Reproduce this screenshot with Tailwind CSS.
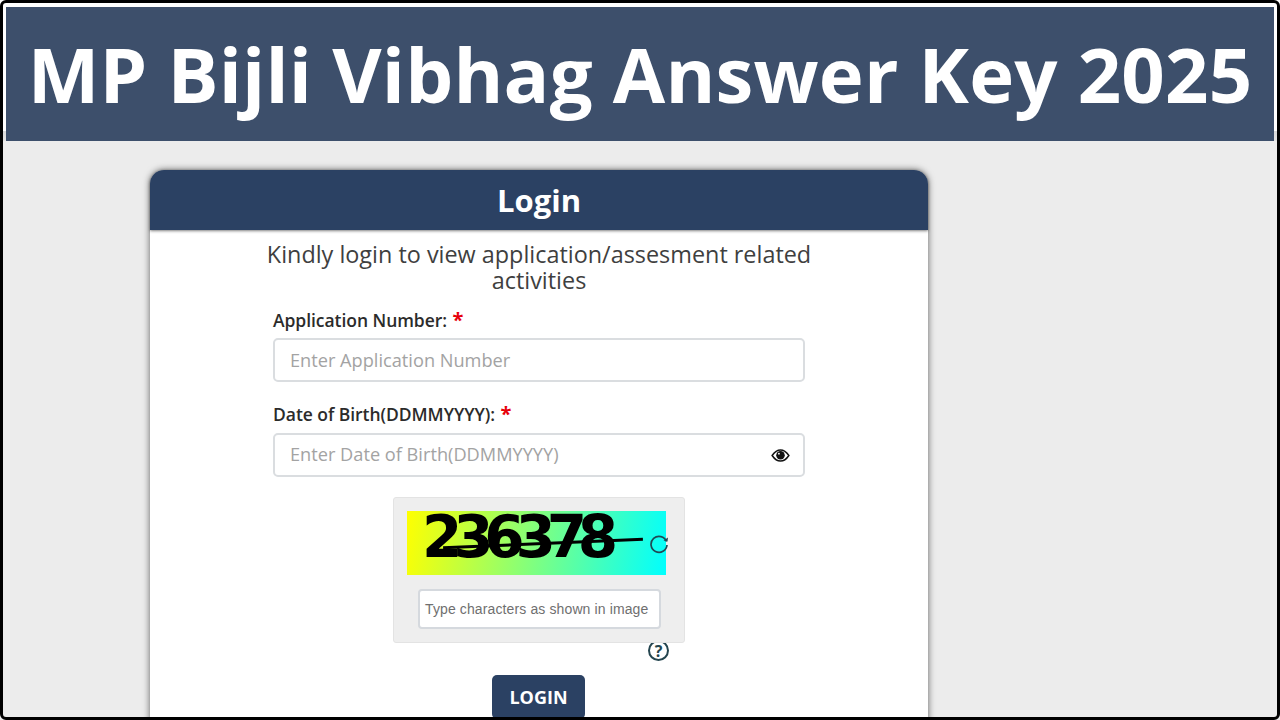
<!DOCTYPE html>
<html lang="en">
<head>
  <meta charset="UTF-8">
  <title>MP Bijli Vibhag Answer Key 2025</title>
  <script src="https://cdn.jsdelivr.net/npm/@tailwindcss/browser@4"></script>
</head>
<body class="bg-white">
  <div class="relative w-[1280px] h-[720px] overflow-hidden bg-[#ececec] font-['Open_Sans',sans-serif]">
    <!-- Banner -->
    <div class="h-[141px] bg-[linear-gradient(#fff_0,#fff_131px,#d9d9d9_131px,#e4e4e4_141px)] pt-[7px] pl-[6px] pr-[6px]">
      <div class="h-[134px] bg-[#3d4f6b] flex items-center justify-center">
        <h1 class="text-[76px] leading-none font-bold text-white whitespace-nowrap tracking-[0.2px]">MP Bijli Vibhag Answer Key 2025</h1>
      </div>
    </div>

    <!-- Login card -->
    <div class="ml-[150px] mt-[29px] w-[778px] h-[560px] bg-white rounded-t-[14px] shadow-[0_0_7px_rgba(0,0,0,0.6)]">
      <div class="h-[60px] bg-[#2b4163] rounded-t-[14px] flex items-center justify-center shadow-[0_1px_3px_rgba(0,0,0,0.5)]">
        <h2 class="text-[31px] font-bold text-white">Login</h2>
      </div>
      <p class="mt-[11px] mx-auto w-[560px] text-center text-[23.400px] leading-[26px] text-[#3f3f3f]">Kindly login to view application/assesment related activities</p>

      <form class="ml-[123px] w-[532px]">
        <label class="block mt-[15px] h-[25px] text-[17.500px] leading-[25px] font-semibold text-[#2b2b2b] tracking-[-0.05px]">Application Number: <span class="ml-[1px] text-red-600 text-[20px] font-bold leading-none">*</span></label>
        <div class="mt-[5px] h-[44px] rounded-[5px] border-2 border-[#dadde0] bg-white pl-[15px] pt-px flex items-center text-[18.200px] text-[#a3a3a3]">Enter Application Number</div>

        <label class="block mt-[20px] h-[25px] text-[17.500px] leading-[25px] font-semibold text-[#2b2b2b] tracking-[-0.05px]">Date of Birth(DDMMYYYY): <span class="ml-[1px] text-red-600 text-[20px] font-bold leading-none">*</span></label>
        <div class="mt-[6px] h-[44px] rounded-[5px] border-2 border-[#dadde0] bg-white pl-[15px] pr-[13px] flex items-center justify-between text-[18.200px] text-[#a3a3a3]">
          <span>Enter Date of Birth(DDMMYYYY)</span>
          <svg width="19" height="13" viewBox="0 0 20 14"><path d="M1 7C4 2.500 7 1 10 1s6 1.500 9 6c-3 4.500-6 6-9 6s-6-1.500-9-6z" fill="#fff" stroke="#111" stroke-width="1.600"/><circle cx="10" cy="6.800" r="4.600" fill="#111"/><circle cx="8.300" cy="5" r="1" fill="#fff"/></svg>
        </div>
      </form>

      <!-- Captcha -->
      <div class="relative ml-[243px] mt-[20px] w-[292px] h-[146px] bg-[#eeeeee] border border-[#e3e3e3] rounded-[3px] pt-[13px]">
        <div class="relative ml-[13px] w-[259px] h-[64px] bg-[linear-gradient(100deg,#ff0,#0ff)]">
          <span class="absolute left-[15px] top-0 text-[58px] leading-[52px] font-bold text-black tracking-[-9.200px] whitespace-nowrap font-['DejaVu_Sans',sans-serif]">236378</span>
          <div class="absolute left-[36px] top-[31px] w-[200px] h-[3px] bg-black -rotate-[2.500deg]"></div>
        </div>
        <svg class="absolute left-[255px] top-[36px]" width="20" height="20" viewBox="0 0 20 20" fill="none"><path d="M17.500 7.500A8 8 0 1 0 18 11" stroke="#1f4a55" stroke-width="1.700"/><path d="M14.500 6.500l4 1 .5-4z" fill="#1f4a55"/></svg>
        <div class="mt-[14px] ml-[24px] w-[243px] h-[40px] bg-white border-2 border-[#d5d9de] rounded-[4px] flex items-center pl-[5px] text-[14px] text-[#6f6f6f] font-['Liberation_Sans',sans-serif] tracking-[0.12px] whitespace-nowrap">Type characters as shown in image</div>
      </div>

      <div class="ml-[498px] mt-[-3px] w-[21px] h-[21px] rounded-full border-2 border-[#24454f] flex items-center justify-center text-[16px] font-bold leading-none text-[#24454f]">?</div>

      <button class="block ml-[342px] mt-[14px] w-[93px] h-[44px] rounded-[5px] bg-[#2b4163] text-white text-[18px] font-bold">LOGIN</button>
    </div>

    <!-- Thumbnail frame -->
    <div class="absolute inset-0 border-[3px] border-black rounded-[6px] pointer-events-none"></div>
  </div>
</body>
</html>
